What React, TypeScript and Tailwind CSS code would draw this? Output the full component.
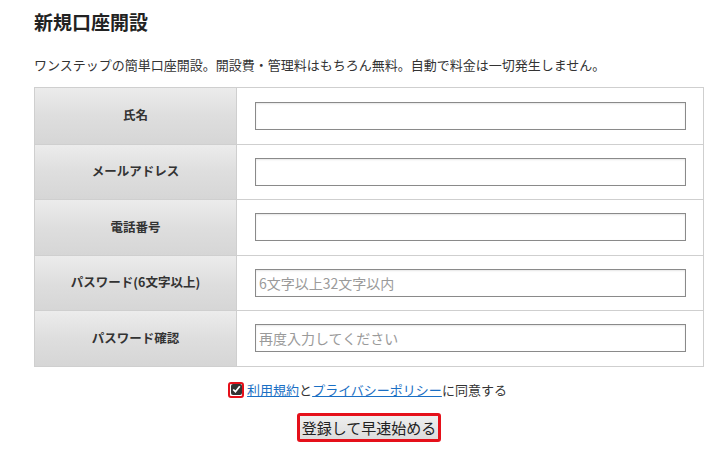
export default function App() {
  const rows = [
    { label: "氏名", placeholder: "" },
    { label: "メールアドレス", placeholder: "" },
    { label: "電話番号", placeholder: "" },
    { label: "パスワード(6文字以上)", placeholder: "6文字以上32文字以内" },
    { label: "パスワード確認", placeholder: "再度入力してください" },
  ]

  return (
    <div
      className="w-[716px] h-[454px] bg-white text-[#333] overflow-hidden"
      style={{ fontFamily: '"Noto Sans CJK JP", "Liberation Sans", sans-serif' }}
    >
      <div className="pl-[34px] pr-[12px] pt-[9px]">
        {/* Title */}
        <h1 className="text-[19px] font-bold leading-[26px] text-[#222]">新規口座開設</h1>
        <p className="mt-[21px] text-[13px] leading-[18px] text-[#333]">
          ワンステップの簡単口座開設。開設費・管理料はもちろん無料。自動で料金は一切発生しません。
        </p>

        {/* Form table */}
        <div className="mt-[13px] w-[670px] border border-[#cfcfcf]">
          {rows.map((row, i) => (
            <div key={row.label} className={`flex h-[55.5px] ${i > 0 ? "border-t border-[#cfcfcf]" : ""}`}>
              <div className="w-[202px] flex items-center justify-center border-r border-[#cfcfcf] bg-gradient-to-b from-[#ececec] via-[#dedede] to-[#d6d6d6] text-[12.5px] font-bold text-[#333]">
                {row.label}
              </div>
              <div className="flex-1 flex items-center pl-[18px] pr-[17px]">
                <input
                  type="text"
                  placeholder={row.placeholder}
                  className="w-full h-[28px] border border-[#8a8a8a] px-[3px] text-[14px] placeholder:text-[#9a9a9a] shadow-[inset_0_1px_2px_rgba(0,0,0,0.1)] outline-none"
                />
              </div>
            </div>
          ))}
        </div>

        {/* Agreement */}
        <div className="mt-[14px] flex items-center justify-center pr-[3px] text-[13px] leading-[18px]">
          <span className="mr-[3px] inline-flex items-center justify-center w-[16px] h-[16px] rounded-[3px] border-2 border-[#e5101a]">
            <input type="checkbox" defaultChecked className="w-[11px] h-[11px] m-0 accent-[#333]" />
          </span>
          <a href="#" className="text-[#1a6fc4] underline">利用規約</a>
          <span>と</span>
          <a href="#" className="text-[#1a6fc4] underline">プライバシーポリシー</a>
          <span>に同意する</span>
        </div>

        {/* Submit */}
        <div className="mt-[14px] flex justify-center">
          <button className="h-[29px] px-[2px] border-[3px] border-[#e5101a] rounded-[3px] bg-gradient-to-b from-[#efefef] to-[#dcdcdc] text-[15px] text-[#222] leading-none">
            登録して早速始める
          </button>
        </div>
      </div>
    </div>
  )
}
